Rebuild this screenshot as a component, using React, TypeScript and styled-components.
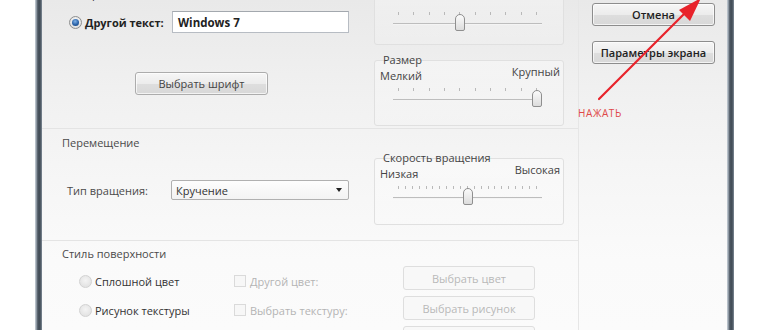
import React from "react";
import styled, {createGlobalStyle, css} from "styled-components";

const GlobalStyle = createGlobalStyle`
  html, body {
    margin: 0;
    padding: 0;
    background: #ffffff;
    overflow: hidden;
  }
  body {
    font-family: "Open Sans", "Noto Sans", "DejaVu Sans", sans-serif;
    font-size: 11px;
    color: #333;
  }
`;

const Root = styled.div`
  position: relative;
  display: flex;
  align-items: stretch;
  width: 770px;
  height: 330px;
  overflow: hidden;
  background: #ffffff;
`;

const Gutter = styled.div`
  width: 35px;
  flex: none;
`;

const FrameBar = styled.div`
  width: 7px;
  flex: none;
  background: linear-gradient(90deg, #b7c0c9 0, #b7c0c9 1px, #65707c 2px, #3e4852 4px, #55606b 6px, #8a96a2 7px);
`;

const Dialog = styled.div`
  width: 685px;
  flex: none;
  display: flex;
  overflow: hidden;
  background: linear-gradient(180deg, #e9e9e9 0, #f1f1f1 100px, #f6f6f6 180px, #fafafa 260px, #fbfbfb 330px);
`;

const Main = styled.div`
  width: 536px;
  flex: none;
  margin-top: -20px;
  display: flex;
  flex-direction: column;
`;

const Section = styled.div<{$height: number; $divider?: boolean}>`
  display: grid;
  grid-template-columns: 326px 210px;
  height: ${p => p.$height}px;
  flex: none;
  box-sizing: border-box;
  ${p => p.$divider && css`
    border-top: 1px solid #e4e4e4;
  `}
`;

const Column = styled.div<{$padTop?: number; $padLeft?: number}>`
  display: flex;
  flex-direction: column;
  align-items: flex-start;
  padding-top: ${p => p.$padTop ?? 0}px;
  padding-left: ${p => p.$padLeft ?? 0}px;
`;

const SidePanel = styled.div`
  width: 149px;
  flex: none;
  box-sizing: border-box;
  border-left: 1px solid #e6e6e6;
  padding: 3px 0 0 13px;
  display: flex;
  flex-direction: column;
  gap: 15px;
`;

const Heading = styled.div<{$top: number}>`
  margin-top: ${p => p.$top}px;
  margin-left: 20px;
  line-height: 14px;
  color: #4a4a4a;
`;

const RadioCircle = styled.span<{$checked?: boolean; $dim?: boolean}>`
  display: inline-block;
  box-sizing: border-box;
  width: 13px;
  height: 13px;
  flex: none;
  border-radius: 50%;
  border: 1px solid ${p => p.$dim ? "#d2d2d2" : "#8e8f8f"};
  background: ${p => p.$dim
    ? "radial-gradient(circle at 50% 40%, #f4f4f4 0, #e4e4e4 70%)"
    : "radial-gradient(circle at 50% 40%, #ffffff 0, #dcdcdc 80%)"};
  position: relative;

  ${p => p.$checked && css`
    &::after {
      content: "";
      position: absolute;
      left: 2px;
      top: 2px;
      width: 7px;
      height: 7px;
      border-radius: 50%;
      background: radial-gradient(circle at 45% 35%, #7fb2e8 0, #2a62a8 55%, #163f73 100%);
    }
  `}
`;

const CheckSquare = styled.span`
  display: inline-block;
  box-sizing: border-box;
  width: 12px;
  height: 12px;
  flex: none;
  border: 1px solid #dadada;
  background: #f7f7f7;
`;

const OptionLabel = styled.span<{$bold?: boolean; $disabled?: boolean}>`
  margin-left: ${p => p.$disabled ? 4 : 3}px;
  font-weight: ${p => p.$bold ? 700 : 400};
  color: ${p => p.$disabled ? "#b4b4b4" : p.$bold ? "#222" : "#333"};
  white-space: nowrap;
`;

const Option = styled.label`
  display: flex;
  align-items: center;
  height: 22px;
`;

const TimeRow = styled.div`
  display: flex;
  align-items: center;
  height: 22px;
  margin-top: 2px;
  padding-left: 27px;
`;

const CustomTextRow = styled.div`
  display: grid;
  grid-template-columns: 103px 177px;
  align-items: center;
  margin-top: 7px;
  padding-left: 27px;
`;

const TextInput = styled.div`
  box-sizing: border-box;
  height: 22px;
  padding: 0 5px;
  display: flex;
  align-items: center;
  border: 1px solid #b7bcc3;
  border-top-color: #a3a8ae;
  background: #ffffff;
  font-weight: 700;
  font-size: 11.5px;
  color: #222;
`;

const Button = styled.div<{$width: number; $height?: number; $disabled?: boolean}>`
  box-sizing: border-box;
  width: ${p => p.$width}px;
  height: ${p => p.$height ?? 23}px;
  flex: none;
  display: flex;
  align-items: center;
  justify-content: center;
  border-radius: 3px;
  white-space: nowrap;
  ${p => p.$disabled
    ? css`
      border: 1px solid #dedede;
      background: #f8f8f8;
      color: #b8b8b8;
    `
    : css`
      border: 1px solid #8d8d8d;
      background: linear-gradient(180deg, #f6f6f6 0, #ececec 50%, #dedede 51%, #d8d8d8 100%);
      box-shadow: inset 0 0 0 1px rgba(255, 255, 255, 0.7);
      color: #222;
    `}
`;

const FontButton = styled(Button)`
  margin-top: 39px;
  margin-left: 93px;
  border-color: #acacac;
  color: #444;
`;

const SideButton = styled(Button)`
  font-weight: 600;
  color: #1e1e1e;
`;

const ComboRow = styled.div`
  display: grid;
  grid-template-columns: 104px 178px;
  align-items: center;
  margin-top: 30px;
  padding-left: 25px;
  color: #4a4a4a;
`;

const Combo = styled.div`
  box-sizing: border-box;
  height: 20px;
  display: flex;
  align-items: center;
  justify-content: space-between;
  padding: 0 6px 0 4px;
  border: 1px solid #b0b0b0;
  border-radius: 2px;
  background: linear-gradient(180deg, #fdfdfd 0, #f3f3f3 100%);
  color: #333;
`;

const ComboArrow = styled.span`
  width: 0;
  height: 0;
  border-left: 3.5px solid transparent;
  border-right: 3.5px solid transparent;
  border-top: 4px solid #222;
`;

const StyleRow = styled.div<{$top: number}>`
  display: grid;
  grid-template-columns: 155px 140px;
  margin-top: ${p => p.$top}px;
  padding-left: 37px;
`;

const ButtonStack = styled.div`
  display: flex;
  flex-direction: column;
  gap: 6px;
  padding-top: 25px;
  padding-left: 35px;
`;

const Panel = styled.div<{$height: number; $gap?: number; $bare?: boolean}>`
  box-sizing: border-box;
  width: 190px;
  height: ${p => p.$height}px;
  margin-bottom: ${p => p.$gap ?? 0}px;
  border: 1px solid #e0e0e0;
  border-radius: 3px;
  background: linear-gradient(180deg, rgba(255, 255, 255, 0.35), rgba(255, 255, 255, 0.1));
  padding-top: ${p => p.$bare ? 23 : 0}px;
  flex: none;
`;

const PanelTitle = styled.div`
  margin-top: -8px;
  margin-left: 8px;
  line-height: 14px;
  color: #444;
`;

const PanelLabels = styled.div`
  display: flex;
  justify-content: space-between;
  align-items: flex-start;
  height: 16px;
  padding: 0 3px 0 5px;
  color: #444;
`;

const MinLabel = styled.span`
  margin-top: 2px;
  line-height: 14px;
`;

const MaxLabel = styled.span`
  margin-top: -2px;
  line-height: 14px;
`;

const TrackArea = styled.div`
  position: relative;
  height: 24px;
  margin: 1px 21px 0 18px;
`;

const Ticks = styled.div`
  position: absolute;
  left: 5px;
  right: 5px;
  top: 4px;
  height: 3px;
  display: flex;
  justify-content: space-between;
`;

const Tick = styled.span`
  width: 1px;
  height: 3px;
  background: #b9b9b9;
`;

const TrackLine = styled.div`
  position: absolute;
  left: 0;
  right: 0;
  top: 15px;
  height: 1px;
  background: #bdbdbd;
  border-bottom: 1px solid #f4f4f4;
`;

const Thumb = styled.div`
  position: absolute;
  top: 6px;
  width: 10px;
  height: 17px;
  margin-left: -5px;
  box-sizing: border-box;
  border: 1px solid #8f8f8f;
  border-radius: 5px 5px 2px 2px;
  background: linear-gradient(180deg, #fbfbfb 0, #ececec 50%, #dcdcdc 100%);
`;

const NoteText = styled.div`
  position: absolute;
  left: 578px;
  top: 106px;
  font-size: 10px;
  letter-spacing: 0.6px;
  color: #e04848;
`;

const ArrowLayer = styled.svg`
  position: absolute;
  left: 0;
  top: 0;
  pointer-events: none;
`;

interface SliderProps {
    title?: string,
    min?: string,
    max?: string,
    ticks: number,
    value: number,
    height: number,
    gap?: number
}

const Slider = ({title, min, max, ticks, value, height, gap}: SliderProps) => {
    const bare = !title;
    const position = 5 + (139 * value) / (ticks - 1);

    return (
        <Panel $height={height} $gap={gap} $bare={bare}>
            {!bare && <PanelTitle>{title}</PanelTitle>}
            {!bare && (
                <PanelLabels>
                    <MinLabel>{min}</MinLabel>
                    <MaxLabel>{max}</MaxLabel>
                </PanelLabels>
            )}
            <TrackArea>
                <Ticks>
                    {Array.from({length: ticks}).map((_, i) => <Tick key={i}/>)}
                </Ticks>
                <TrackLine/>
                <Thumb style={{left: position}}/>
            </TrackArea>
        </Panel>
    );
};

export default function App() {
    return (
        <Root>
            <GlobalStyle/>
            <Gutter/>
            <FrameBar/>
            <Dialog>
                <Main>
                    <Section $height={148}>
                        <Column>
                            <TimeRow>
                                <RadioCircle/>
                                <OptionLabel>Время</OptionLabel>
                            </TimeRow>
                            <CustomTextRow>
                                <Option>
                                    <RadioCircle $checked/>
                                    <OptionLabel $bold>Другой текст:</OptionLabel>
                                </Option>
                                <TextInput>Windows 7</TextInput>
                            </CustomTextRow>
                            <FontButton $width={133}>Выбрать шрифт</FontButton>
                        </Column>
                        <Column $padTop={3} $padLeft={6}>
                            <Slider ticks={10} value={4} height={62} gap={15}/>
                            <Slider title="Размер" min="Мелкий" max="Крупный" ticks={10} value={9} height={66}/>
                        </Column>
                    </Section>

                    <Section $height={112} $divider>
                        <Column>
                            <Heading $top={7}>Перемещение</Heading>
                            <ComboRow>
                                <span>Тип вращения:</span>
                                <Combo>
                                    <span>Кручение</span>
                                    <ComboArrow/>
                                </Combo>
                            </ComboRow>
                        </Column>
                        <Column $padTop={29} $padLeft={6}>
                            <Slider title="Скорость вращения" min="Низкая" max="Высокая" ticks={21} value={10} height={67}/>
                        </Column>
                    </Section>

                    <Section $height={120} $divider>
                        <Column>
                            <Heading $top={6}>Стиль поверхности</Heading>
                            <StyleRow $top={9}>
                                <Option>
                                    <RadioCircle $dim/>
                                    <OptionLabel>Сплошной цвет</OptionLabel>
                                </Option>
                                <Option>
                                    <CheckSquare/>
                                    <OptionLabel $disabled>Другой цвет:</OptionLabel>
                                </Option>
                            </StyleRow>
                            <StyleRow $top={7}>
                                <Option>
                                    <RadioCircle $dim/>
                                    <OptionLabel>Рисунок текстуры</OptionLabel>
                                </Option>
                                <Option>
                                    <CheckSquare/>
                                    <OptionLabel $disabled>Выбрать текстуру:</OptionLabel>
                                </Option>
                            </StyleRow>
                        </Column>
                        <ButtonStack>
                            <Button $width={132} $height={24} $disabled>Выбрать цвет</Button>
                            <Button $width={132} $height={24} $disabled>Выбрать рисунок</Button>
                            <Button $width={132} $height={24} $disabled>Параметры</Button>
                        </ButtonStack>
                    </Section>
                </Main>

                <SidePanel>
                    <SideButton $width={123}>Отмена</SideButton>
                    <SideButton $width={123}>Параметры экрана</SideButton>
                </SidePanel>
            </Dialog>
            <FrameBar/>

            <NoteText>НАЖАТЬ</NoteText>
            <ArrowLayer width={770} height={330} viewBox="0 0 770 330">
                <line x1={599} y1={99} x2={688} y2={10} stroke="#e8232b" strokeWidth={2.2} strokeLinecap="round"/>
                <polygon points="701,-2 690,21 679,10" fill="#e8232b"/>
            </ArrowLayer>
        </Root>
    );
}
